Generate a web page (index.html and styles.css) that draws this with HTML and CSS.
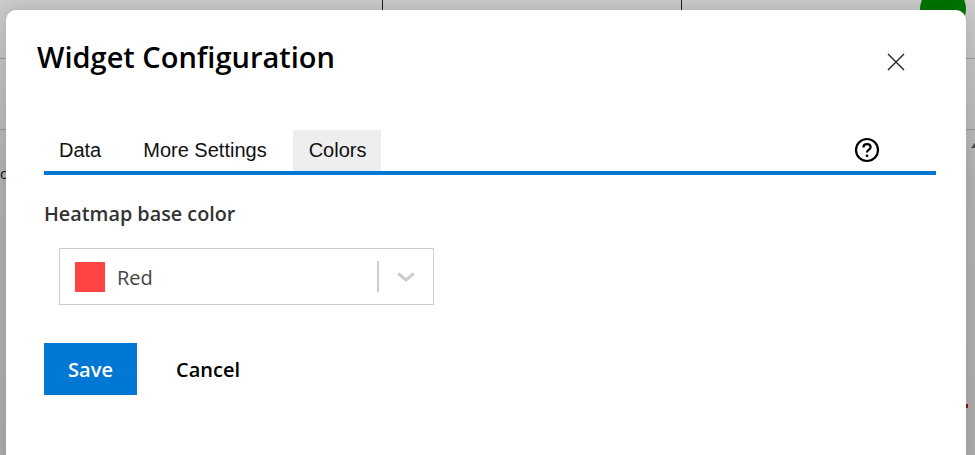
FILE: index.html
```html
<!DOCTYPE html>
<html lang="en">
<head>
    <meta charset="UTF-8">
    <title>Widget Configuration</title>
    <link rel="stylesheet" href="styles.css">
</head>
<body>
    <div class="page">
        <div class="page-top">
            <div class="page-cell"></div>
            <div class="page-cell"></div>
            <div class="page-cell"></div>
            <div class="avatar"></div>
        </div>
        <div class="page-row">
            <span class="page-letter">c</span>
            <span class="page-arrow"></span>
        </div>
        <span class="page-tick"></span>
    </div>
    <div class="overlay"></div>

    <div class="modal">
        <div class="modal-header">
            <h1>Widget Configuration</h1>
            <button class="close-btn" aria-label="Close">
                <svg width="18" height="18" viewBox="0 0 18 18">
                    <path d="M1 1 L17 17 M17 1 L1 17" stroke="#222" stroke-width="1.4" fill="none" />
                </svg>
            </button>
        </div>

        <div class="tabs">
            <div class="tab">Data</div>
            <div class="tab">More Settings</div>
            <div class="tab active">Colors</div>
            <svg class="help" width="26" height="26" viewBox="0 0 26 26">
                <circle cx="13" cy="13" r="11" stroke="#000" stroke-width="2.2" fill="none" />
                <path d="M9.4 10.4 C9.4 8.2 11 7.2 13 7.2 C15 7.2 16.6 8.4 16.6 10.2 C16.6 12.6 13 12.6 13 15.4" stroke="#000" stroke-width="2.2" fill="none" />
                <circle cx="13" cy="18.8" r="1.4" fill="#000" />
            </svg>
        </div>

        <label class="field-label">Heatmap base color</label>
        <div class="select">
            <span class="swatch"></span>
            <span class="select-value">Red</span>
            <span class="select-sep"></span>
            <svg class="select-arrow" width="18" height="10" viewBox="0 0 18 10">
                <path d="M1.2 1.5 L9 8 L16.8 1.5" stroke="#ccc" stroke-width="3" fill="none" />
            </svg>
        </div>

        <div class="actions">
            <button class="btn-save">Save</button>
            <button class="btn-cancel">Cancel</button>
        </div>
    </div>
</body>
</html>
```

FILE: styles.css
```css
* { margin: 0; padding: 0; box-sizing: border-box; }
html, body {
    width: 975px;
    height: 455px;
    overflow: hidden;
}
body {
    font-family: "Open Sans", "Noto Sans", sans-serif;
    background: #fff;
    position: relative;
}

/* page behind the dialog */
.page-top {
    display: grid;
    grid-template-columns: 382px 299px 1fr;
    height: 59px;
    border-bottom: 1px solid #ccc;
    position: relative;
    overflow: hidden;
}
.page-cell + .page-cell {
    border-left: 1px solid #222;
}
.avatar {
    position: absolute;
    left: 920px;
    top: -14px;
    width: 46px;
    height: 46px;
    border-radius: 50%;
    background: #009000;
}
.page-row {
    height: 71px;
    border-bottom: 1px solid #ccc;
}
.page-letter {
    position: absolute;
    left: 0;
    top: 164px;
    font-size: 14px;
    color: #111;
}
.page-arrow {
    position: absolute;
    left: 971px;
    top: 140px;
    border-left: 6px solid transparent;
    border-right: 6px solid transparent;
    border-bottom: 8px solid #666;
}
.page-tick {
    position: absolute;
    left: 966px;
    top: 404px;
    width: 2px;
    height: 4px;
    background: #d01818;
}
.overlay {
    position: absolute;
    inset: 0;
    background: linear-gradient(to bottom, rgba(0, 0, 0, 0.2), rgba(0, 0, 0, 0.3) 40%, rgba(0, 0, 0, 0.32));
}

/* dialog */
.modal {
    position: absolute;
    left: 6px;
    top: 10px;
    width: 960px;
    height: 460px;
    background: #fff;
    border-radius: 10px;
    box-shadow: 0 0 20px rgba(0, 0, 0, 0.15);
    padding: 0 30px 0 38px;
}
.modal-header {
    display: flex;
    justify-content: space-between;
    padding-top: 27px;
    height: 120px;
    margin-left: -7px;
    margin-right: -30px;
    padding-right: 61px;
}
h1 {
    font-size: 29px;
    font-weight: 600;
    line-height: 40px;
    color: #000;
}
.close-btn {
    border: none;
    background: none;
    width: 18px;
    height: 18px;
    margin-top: 16px;
}
.close-btn svg { display: block; }

.tabs {
    display: flex;
    align-items: stretch;
    height: 45px;
    border-bottom: 4px solid #0078d4;
    position: relative;
    font-family: "Liberation Sans", Arial, sans-serif;
    font-size: 20px;
    color: #111;
}
.tab {
    padding: 9px 15px 0;
}
.tab:nth-child(2) {
    margin-left: 12px;
    padding: 9px 12px 0 15px;
}
.tab.active {
    background: #eee;
    margin-left: 14px;
    padding: 9px 15px 0 16px;
}
.help {
    margin-left: auto;
    margin-right: 56px;
    margin-top: 7px;
}

.field-label {
    display: block;
    margin-top: 26px;
    font-size: 19.8px;
    font-weight: 600;
    line-height: 26px;
    color: #333;
}
.select {
    display: flex;
    align-items: center;
    width: 375px;
    height: 57px;
    margin: 21px 0 0 15px;
    padding: 0 18px 0 15px;
    border: 1px solid #ccc;
    background: #fff;
}
.swatch {
    width: 30px;
    height: 30px;
    background: #ff4444;
}
.select-value {
    margin: 2px 0 0 12px;
    font-size: 20px;
    color: #444;
}
.select-sep {
    width: 2px;
    height: 31px;
    margin-left: auto;
    background: #ccc;
}
.select-arrow {
    margin-left: 18px;
}

.actions {
    display: flex;
    align-items: center;
    margin-top: 38px;
}
.actions button {
    border: none;
    font-family: inherit;
    font-size: 20px;
    font-weight: 600;
}
.btn-save {
    width: 93px;
    height: 52px;
    background: #0078d4;
    color: #fff;
}
.btn-cancel {
    margin-left: 39px;
    background: none;
    color: #000;
}
```
